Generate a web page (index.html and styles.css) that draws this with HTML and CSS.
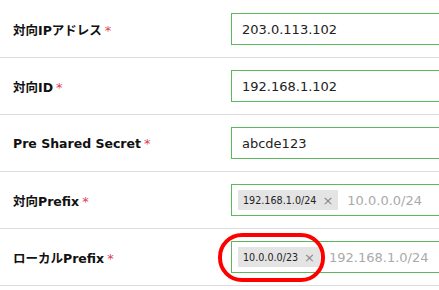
FILE: index.html
```html
<!DOCTYPE html>
<html lang="ja">
<head>
<meta charset="utf-8">
<link rel="stylesheet" href="styles.css">
</head>
<body>
<div class="form">
  <div class="row">
    <div class="label">対向IPアドレス<span class="req">*</span></div>
    <div class="field"><div class="input">203.0.113.102</div></div>
  </div>
  <div class="row">
    <div class="label">対向ID<span class="req">*</span></div>
    <div class="field"><div class="input">192.168.1.102</div></div>
  </div>
  <div class="row">
    <div class="label">Pre Shared Secret<span class="req">*</span></div>
    <div class="field"><div class="input">abcde123</div></div>
  </div>
  <div class="row">
    <div class="label">対向Prefix<span class="req">*</span></div>
    <div class="field"><div class="input tags"><span class="tag">192.168.1.0/24<span class="x">×</span></span><span class="ph">10.0.0.0/24</span></div></div>
  </div>
  <div class="row">
    <div class="label">ローカルPrefix<span class="req">*</span></div>
    <div class="field"><div class="input tags"><span class="tag">10.0.0.0/23<span class="x">×</span></span><span class="ph">192.168.1.0/24</span></div></div>
  </div>
  <div class="mark"></div>
</div>
</body>
</html>
```
FILE: styles.css
```css
html, body {
  margin: 0;
  padding: 0;
  background: #fff;
  overflow: hidden;
}
body {
  font-family: "DejaVu Sans", "Noto Sans CJK JP", sans-serif;
  color: #222;
}
.form {
  position: relative;
  width: 460px;
  padding-top: 1px;
}
.row {
  display: grid;
  grid-template-columns: 231px 1fr;
  align-items: center;
  height: 57px;
  box-sizing: border-box;
  padding: 12px 0 12px;
  border-bottom: 1px solid #dedede;
}
.label {
  padding-left: 13px;
  font-weight: bold;
  font-size: 12.5px;
  color: #111;
  white-space: nowrap;
}
.req {
  color: #e0405a;
  margin-left: 3px;
  font-weight: normal;
  font-size: 13px;
}
.input {
  height: 32px;
  box-sizing: border-box;
  border: 1px solid #5cb85c;
  display: flex;
  align-items: center;
  padding-left: 10px;
  font-size: 13px;
  color: #222;
}
.tags {
  padding-left: 6px;
}
.tag {
  display: inline-flex;
  align-items: center;
  height: 20px;
  background: #e4e4e4;
  padding: 0 5px;
  font-size: 9.6px;
  color: #222;
}
.x {
  color: #888;
  font-size: 13px;
  line-height: 1;
  margin-left: 6px;
}
.ph {
  margin-left: 9px;
  color: #aaa;
  font-size: 13px;
}
.mark {
  position: absolute;
  left: 218px;
  top: 233px;
  width: 107px;
  height: 49px;
  box-sizing: border-box;
  border: 4px solid #f00;
  border-radius: 24px;
}
```
